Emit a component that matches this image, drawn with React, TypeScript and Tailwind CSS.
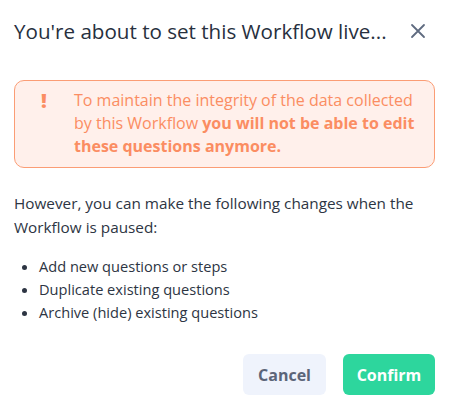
import React from 'react';

const App: React.FC = () => {
  return (
    <div className="w-[455px] h-[410px] bg-white pl-[14px] pr-[20px] text-[#2d3543]" style={{ fontFamily: '"Open Sans", "Liberation Sans", sans-serif' }}>
      <div className="flex items-center justify-between pt-[14px] h-[61px] pb-[14px]">
        <h2 className="text-[20.6px] leading-[28px] text-[#27303e]">You're about to set this Workflow live...</h2>
        <button className="mr-[9px] text-[#5f6b80]">
          <svg className="w-[16px] h-[16px]" viewBox="0 0 16 16" fill="none" stroke="currentColor" strokeWidth={1.8} strokeLinecap="round">
            <path d="M2 2l12 12M14 2L2 14" />
          </svg>
        </button>
      </div>

      <div className="mt-[19px] flex rounded-[10px] border border-[#fb9d75] bg-[#fff0eb] pt-[8px] pb-[9px] pl-[26px] pr-[10px] text-[#fb8d62]">
        <span className="w-[33px] shrink-0 text-[20px] leading-[23px] font-extrabold">!</span>
        <p className="text-[16px] leading-[23px]">
          To maintain the integrity of the data collected by this Workflow <span className="font-bold">you will not be able to edit these questions anymore.</span>
        </p>
      </div>

      <p className="mt-[23px] text-[15.3px] leading-[24px]">
        However, you can make the following changes when the Workflow is paused:
      </p>

      <ul className="mt-[16px] list-disc pl-[25px] text-[14.6px] leading-[23px]">
        <li>Add new questions or steps</li>
        <li>Duplicate existing questions</li>
        <li>Archive (hide) existing questions</li>
      </ul>

      <div className="mt-[30px] flex justify-end gap-[17px]">
        <button className="w-[83px] h-[41px] rounded-[6px] bg-[#eff3fc] text-[16px] font-bold text-[#5b6579]">Cancel</button>
        <button className="w-[92px] h-[41px] rounded-[6px] bg-[#2dd69d] text-[16px] font-bold text-white">Confirm</button>
      </div>
    </div>
  );
};

export default App;
